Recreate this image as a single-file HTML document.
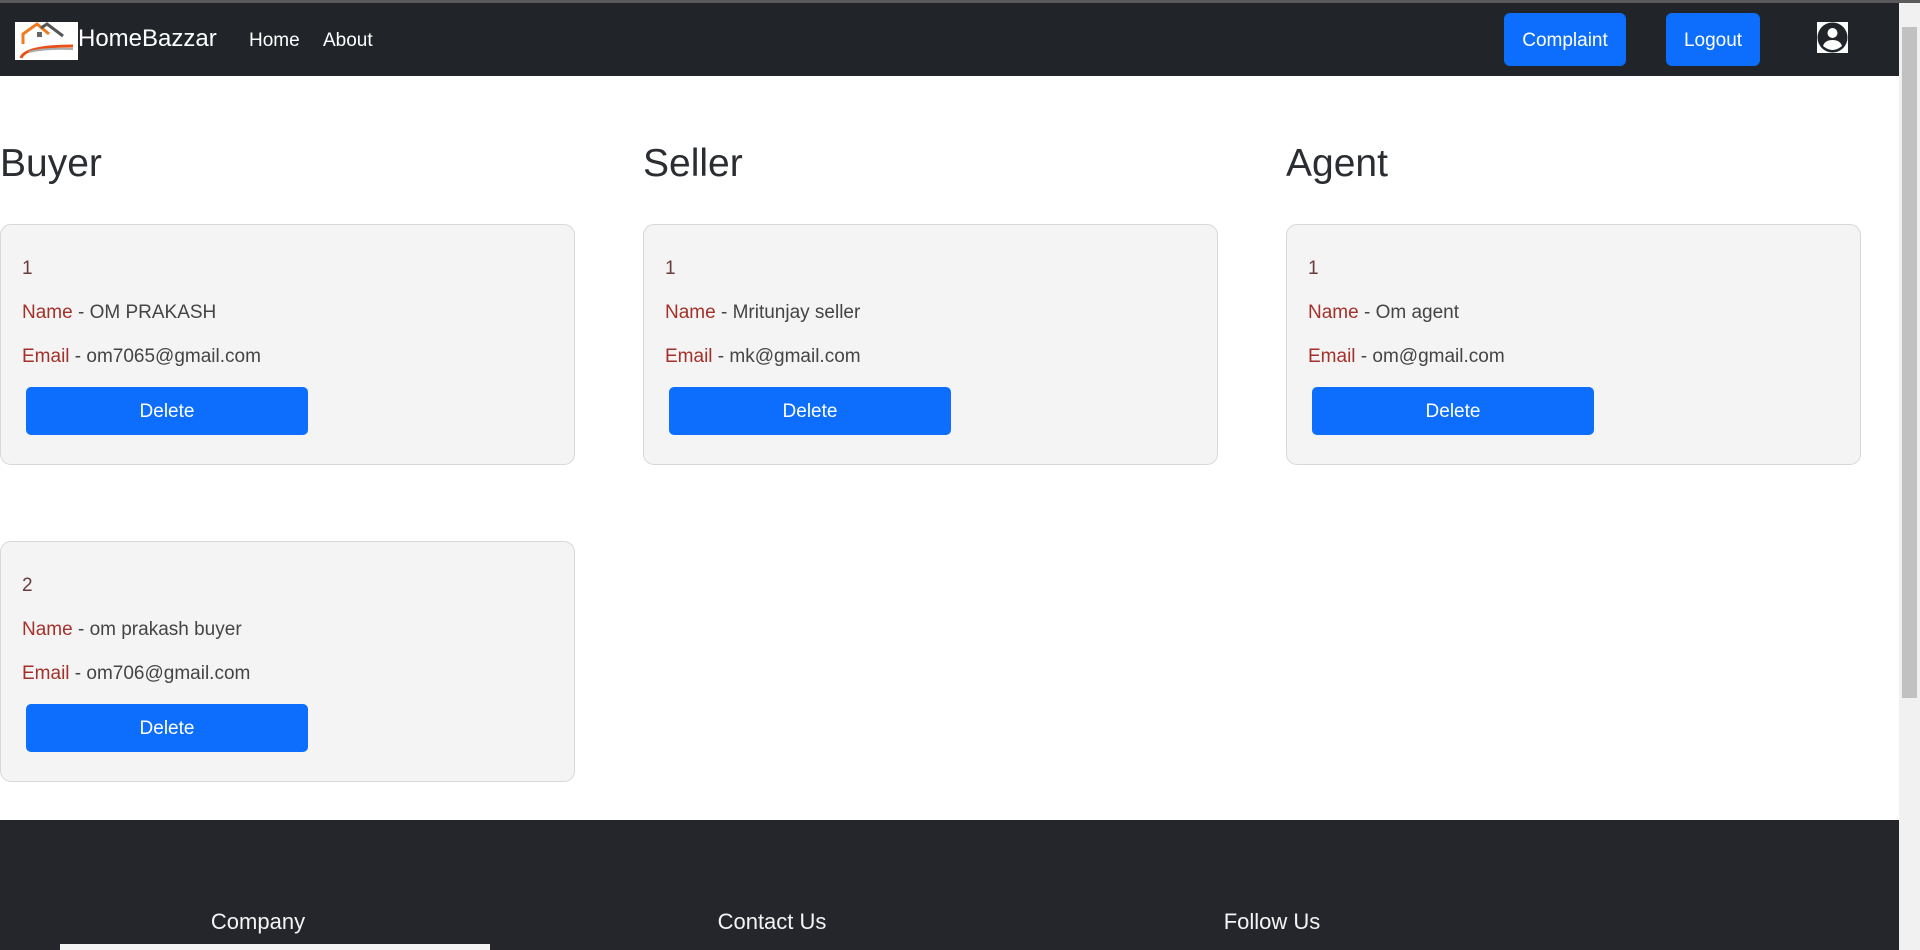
<!DOCTYPE html>
<html><head><meta charset="utf-8"><style>
*{box-sizing:border-box;margin:0;padding:0}
body{width:1920px;height:950px;overflow:hidden;background:#fff;font-family:"Liberation Sans",Arial,sans-serif;position:relative}
.top{position:absolute;left:0;top:0;width:1920px;height:3px;background:#5a5a5a}
nav{position:absolute;left:0;top:3px;width:1899px;height:73px;background:#212529}
.logo{position:absolute;left:15px;top:19px;width:63px;height:38px;background:#fff}
.brand{position:absolute;left:78px;top:22px;color:#fff;font-size:24px}
.nl{position:absolute;top:27px;color:#fff;font-size:19px}
.btn{position:absolute;background:#0d6efd;color:#fff;border-radius:6px;font-size:19px;display:flex;align-items:center;justify-content:center;padding-top:2px}
.av{position:absolute;left:1817px;top:19px;width:31px;height:31px;background:#fff}
.sb{position:absolute;right:0;top:3px;width:21px;height:947px;background:#f1f1f1}
.thumb{position:absolute;right:3px;top:24px;width:15px;height:671px;background:#c1c1c1}
h2{position:absolute;top:142px;font-size:39px;font-weight:normal;color:#2a2d31}
.card{position:absolute;width:575px;height:241px;background:#f4f4f4;border:1px solid #d8d8d8;border-radius:11px}
.card p{position:absolute;left:21px;font-size:19px;color:#444}
.card .l{color:#a3312a}
.card .del{position:absolute;left:25px;top:162px;width:282px;height:48px;background:#0d6efd;color:#fff;border-radius:5px;font-size:19px;display:flex;align-items:center;justify-content:center;padding-top:2px}
footer{position:absolute;left:0;top:820px;width:1899px;height:130px;background:#24262b}
.fh{position:absolute;top:89px;color:#f4f4f4;font-size:22px;transform:translateX(-50%)}
</style></head><body>
<div class="top"></div>
<nav>
<div class="logo"><svg width="63" height="38" viewBox="0 0 63 38"><path d="M8 22 L8 12 L22 2 L34 12" fill="none" stroke="#f07a20" stroke-width="3"/><path d="M26 6 L32 2 L48 14" fill="none" stroke="#555" stroke-width="3"/><rect x="22" y="10" width="5" height="5" fill="#666"/><path d="M6 36 Q10 24 58 24" fill="none" stroke="#e8501a" stroke-width="3"/><path d="M14 30 Q30 26 58 27" fill="none" stroke="#aaa" stroke-width="2"/></svg></div>
<div class="brand">HomeBazzar</div>
<div class="nl" style="left:249px">Home</div>
<div class="nl" style="left:323px">About</div>
<div class="btn" style="left:1504px;top:10px;width:122px;height:53px">Complaint</div>
<div class="btn" style="left:1666px;top:10px;width:94px;height:53px">Logout</div>
<div class="av"><svg width="31" height="31" viewBox="0 0 31 31"><circle cx="15.5" cy="15.5" r="15" fill="#212529"/><circle cx="15.5" cy="11" r="5" fill="#fff"/><path d="M6 24 Q8 18 15.5 18 Q23 18 25 24 Q20 28 15.5 28 Q11 28 6 24Z" fill="#fff"/></svg></div>
</nav>
<div class="sb"><div class="thumb"></div></div>

<h2 style="left:0">Buyer</h2>
<h2 style="left:643px">Seller</h2>
<h2 style="left:1286px">Agent</h2>

<div class="card" style="left:0;top:224px">
<p style="top:33px;color:#6b3b3b">1</p>
<p style="top:77px"><span class="l">Name</span> - OM PRAKASH</p>
<p style="top:121px"><span class="l">Email</span> - om7065@gmail.com</p>
<div class="del">Delete</div></div>
<div class="card" style="left:643px;top:224px">
<p style="top:33px;color:#6b3b3b">1</p>
<p style="top:77px"><span class="l">Name</span> - Mritunjay seller</p>
<p style="top:121px"><span class="l">Email</span> - mk@gmail.com</p>
<div class="del">Delete</div></div>
<div class="card" style="left:1286px;top:224px">
<p style="top:33px;color:#6b3b3b">1</p>
<p style="top:77px"><span class="l">Name</span> - Om agent</p>
<p style="top:121px"><span class="l">Email</span> - om@gmail.com</p>
<div class="del">Delete</div></div>
<div class="card" style="left:0;top:541px">
<p style="top:33px;color:#6b3b3b">2</p>
<p style="top:77px"><span class="l">Name</span> - om prakash buyer</p>
<p style="top:121px"><span class="l">Email</span> - om706@gmail.com</p>
<div class="del">Delete</div></div>

<footer>
<div class="fh" style="left:258px">Company</div>
<div class="fh" style="left:772px">Contact Us</div>
<div class="fh" style="left:1272px">Follow Us</div>
</footer>
<div style="position:absolute;left:60px;top:944px;width:430px;height:6px;background:#f4f4f4"></div>
</body></html>
